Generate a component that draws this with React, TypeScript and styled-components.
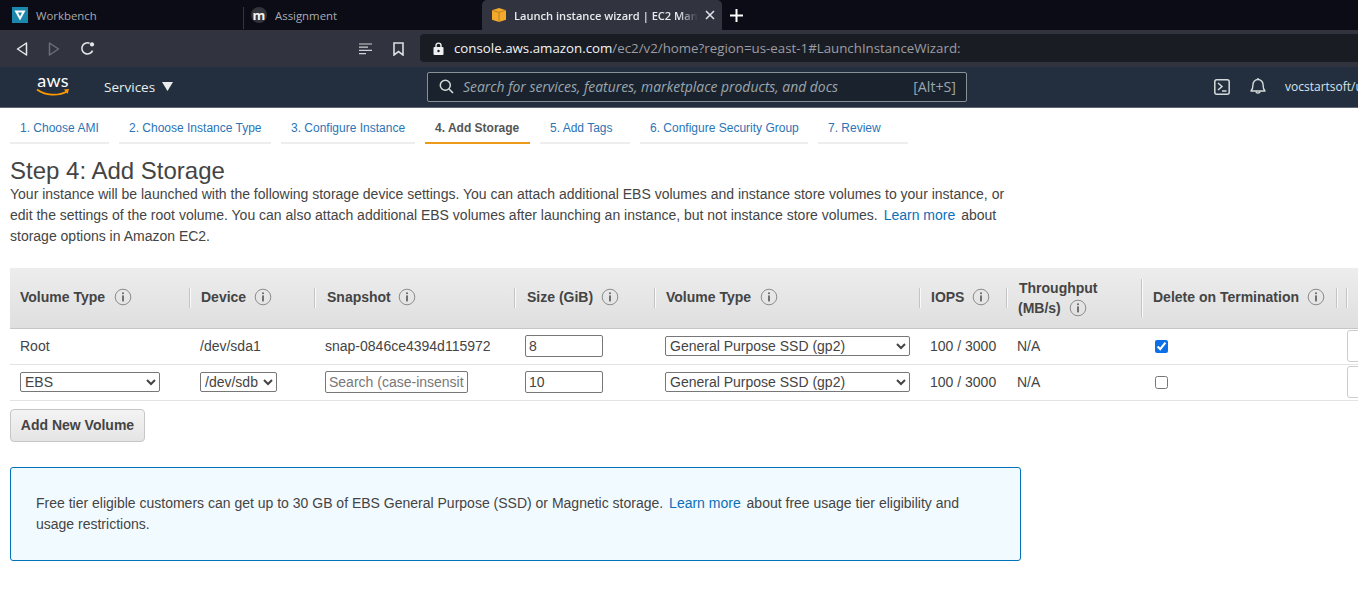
import React from 'react';
import styled, { createGlobalStyle } from 'styled-components';

const GlobalStyle = createGlobalStyle`
  html, body {
    margin: 0;
    padding: 0;
    width: 1358px;
    height: 599px;
    overflow: hidden;
    background: #fff;
  }
  * { box-sizing: border-box; }
`;

const steps = [
  { label: '1. Choose AMI', width: 99 },
  { label: '2. Choose Instance Type', width: 152 },
  { label: '3. Configure Instance', width: 134 },
  { label: '4. Add Storage', width: 105, active: true },
  { label: '5. Add Tags', width: 90 },
  { label: '6. Configure Security Group', width: 168 },
  { label: '7. Review', width: 90 },
];

const InfoIcon = () => (
  <InfoSvg viewBox="0 0 18 18">
    <circle cx="9" cy="9" r="7.8" fill="none" stroke="#8c8c8c" strokeWidth="1" />
    <rect x="8.2" y="7.4" width="1.6" height="6" fill="#555" />
    <rect x="8.2" y="4.4" width="1.6" height="1.7" fill="#555" />
  </InfoSvg>
);

const Head = ({ gap = 9, children }: { gap?: number; children: React.ReactNode }) => (
  <HeadLabel $gap={gap}>
    {children}
    <InfoIcon />
  </HeadLabel>
);

const App = () => (
  <Page>
    <GlobalStyle />
    <TabStrip>
      <Tab $width={243} $pad={12}>
        <svg width="16" height="16" viewBox="0 0 16 16">
          <rect width="16" height="16" fill="#1b87ad" />
          <path d="M2.5 3.5h11L8 13.5z" fill="#fff" />
          <path d="M6 5.5h4L8 9.5z" fill="#1b87ad" />
        </svg>
        <TabTitle>Workbench</TabTitle>
      </Tab>
      <TabDivider />
      <Tab $width={238} $pad={7}>
        <MoodleIcon>m</MoodleIcon>
        <TabTitle>Assignment</TabTitle>
      </Tab>
      <ActiveTab>
        <svg width="16" height="16" viewBox="0 0 16 16">
          <path d="M1 3.2 8 1l7 2.2v9.6L8 15l-7-2.2z" fill="#f2a92c" />
          <path d="M1 3.2 8 5.4l7-2.2" fill="none" stroke="#a8701a" strokeWidth="0.7" />
          <path d="M8 5.4V15" stroke="#a8701a" strokeWidth="0.7" />
        </svg>
        <ActiveTitle>Launch instance wizard | EC2 Management Console</ActiveTitle>
        <svg width="10" height="10" viewBox="0 0 10 10">
          <path d="M1 1l8 8M9 1l-8 8" stroke="#e4e6ea" strokeWidth="1.5" />
        </svg>
      </ActiveTab>
      <NewTab>
        <svg width="13" height="13" viewBox="0 0 13 13">
          <path d="M6.5 0v13M0 6.5h13" stroke="#fff" strokeWidth="2" />
        </svg>
      </NewTab>
    </TabStrip>

    <Toolbar>
      <NavIcons>
        <svg width="12" height="14" viewBox="0 0 12 14">
          <path d="M10.5 1 1.5 7l9 6z" fill="none" stroke="#e6e7ea" strokeWidth="1.5" strokeLinejoin="round" />
        </svg>
        <svg width="12" height="14" viewBox="0 0 12 14">
          <path d="M1.5 1l9 6-9 6z" fill="none" stroke="#6b6e78" strokeWidth="1.5" strokeLinejoin="round" />
        </svg>
        <svg width="15" height="15" viewBox="0 0 15 15">
          <path d="M12.6 9.6A5.6 5.6 0 1 1 9.6 2.2" fill="none" stroke="#e6e7ea" strokeWidth="1.6" />
          <circle cx="12" cy="3.4" r="2.1" fill="#e6e7ea" />
        </svg>
      </NavIcons>
      <ToolbarRight>
        <svg width="14" height="12" viewBox="0 0 14 12">
          <path d="M0 1h13M0 4.2h9M0 7.4h13M0 10.6h7" stroke="#cfd1d6" strokeWidth="1.2" />
        </svg>
        <svg width="11" height="14" viewBox="0 0 11 14">
          <path d="M1 1h9v12L5.5 9.6 1 13z" fill="none" stroke="#dcdde1" strokeWidth="1.6" />
        </svg>
      </ToolbarRight>
      <AddressBar>
        <svg width="11" height="13" viewBox="0 0 11 13">
          <path d="M3 5.5V3.6a2.5 2.5 0 0 1 5 0v1.9" fill="none" stroke="#f0f0f2" strokeWidth="1.4" />
          <rect x="0.5" y="5" width="10" height="8" rx="1" fill="#f0f0f2" />
          <circle cx="5.5" cy="9" r="1.2" fill="#1a1c23" />
        </svg>
        <Url>
          console.aws.amazon.com<UrlPath>/ec2/v2/home?region=us-east-1#LaunchInstanceWizard:</UrlPath>
        </Url>
      </AddressBar>
    </Toolbar>

    <AwsNav>
      <AwsLogo>
        <AwsWord>aws</AwsWord>
        <svg width="34" height="9" viewBox="0 0 34 9">
          <path d="M1 1.5c8 6 21 7 30 2" fill="none" stroke="#f90" strokeWidth="1.7" />
          <path d="M28 1.5l5-.5-1.5 5z" fill="#f90" />
        </svg>
      </AwsLogo>
      <ServicesButton>
        Services
        <svg width="11" height="9" viewBox="0 0 11 9">
          <path d="M0 0h11L5.5 9z" fill="#eaeded" />
        </svg>
      </ServicesButton>
      <SearchBox>
        <svg width="15" height="15" viewBox="0 0 15 15">
          <circle cx="6.3" cy="6.3" r="5" fill="none" stroke="#d5dbdb" strokeWidth="1.5" />
          <path d="M10 10l4 4" stroke="#d5dbdb" strokeWidth="1.6" />
        </svg>
        <SearchText>Search for services, features, marketplace products, and docs</SearchText>
        <Shortcut>[Alt+S]</Shortcut>
      </SearchBox>
      <NavRight>
        <svg width="16" height="16" viewBox="0 0 16 16">
          <rect x="0.8" y="0.8" width="14.4" height="14.4" rx="2" fill="none" stroke="#d5dbdb" strokeWidth="1.5" />
          <path d="M4 4l4 3.5L4 11M8 12h4.5" fill="none" stroke="#d5dbdb" strokeWidth="1.5" />
        </svg>
        <svg width="16" height="17" viewBox="0 0 16 17">
          <path d="M1 13c2-2 2-3.5 2-6.5a5 5 0 0 1 10 0c0 3 0 4.5 2 6.5z" fill="none" stroke="#d5dbdb" strokeWidth="1.4" strokeLinejoin="round" />
          <path d="M8 0v1.5" stroke="#d5dbdb" strokeWidth="1.4" />
          <path d="M5.8 13.5a2.3 2.3 0 0 0 4.4 0" fill="none" stroke="#d5dbdb" strokeWidth="1.4" />
        </svg>
        <UserName>vocstartsoft/user1234</UserName>
      </NavRight>
    </AwsNav>

    <Wizard>
      {steps.map((step) => (
        <Step key={step.label} $width={step.width} $active={step.active}>
          {step.label}
        </Step>
      ))}
    </Wizard>

    <Content>
      <Title>Step 4: Add Storage</Title>
      <Intro>
        Your instance will be launched with the following storage device settings. You can attach
        additional EBS volumes and instance store volumes to your instance, or edit the settings of
        the root volume. You can also attach additional EBS volumes after launching an instance, but
        not instance store volumes. <Link>Learn more</Link> about storage options in Amazon EC2.
      </Intro>

      <TableWrap>
        <Table>
          <colgroup>
            <col width="180" />
            <col width="125" />
            <col width="200" />
            <col width="140" />
            <col width="265" />
            <col width="87" />
            <col width="135" />
            <col width="195" />
            <col width="10" />
            <col width="61" />
          </colgroup>
          <thead>
            <tr>
              <Th><Head>Volume Type</Head></Th>
              <Th $pad={11}><Head gap={8}>Device</Head></Th>
              <Th $pad={12}><Head gap={7}>Snapshot</Head></Th>
              <Th $pad={12}><Head gap={8}>Size (GiB)</Head></Th>
              <Th $pad={11}><Head>Volume Type</Head></Th>
              <Th $pad={11}><Head gap={8}>IOPS</Head></Th>
              <Th $pad={11} $tall>
                <ThroughputLine>Throughput</ThroughputLine>
                <Head gap={8}>(MB/s)</Head>
              </Th>
              <Th $pad={11}><Head gap={8}>Delete on Termination</Head></Th>
              <Th />
              <Th />
            </tr>
          </thead>
          <tbody>
            <tr>
              <Td>Root</Td>
              <Td>/dev/sda1</Td>
              <Td>snap-0846ce4394d115972</Td>
              <Td><SizeInput defaultValue="8" /></Td>
              <Td>
                <TypeSelect $width={245}>
                  <option>General Purpose SSD (gp2)</option>
                </TypeSelect>
              </Td>
              <Td>100 / 3000</Td>
              <Td>N/A</Td>
              <CheckCell><Check type="checkbox" defaultChecked /></CheckCell>
              <Td />
              <Td><RowAction /></Td>
            </tr>
            <tr>
              <Td>
                <TypeSelect $width={140}>
                  <option>EBS</option>
                </TypeSelect>
              </Td>
              <Td>
                <TypeSelect $width={77}>
                  <option>/dev/sdb</option>
                </TypeSelect>
              </Td>
              <Td>
                <SnapshotInput placeholder="Search (case-insensitive)" />
              </Td>
              <Td><SizeInput defaultValue="10" /></Td>
              <Td>
                <TypeSelect $width={245}>
                  <option>General Purpose SSD (gp2)</option>
                </TypeSelect>
              </Td>
              <Td>100 / 3000</Td>
              <Td>N/A</Td>
              <CheckCell><Check type="checkbox" /></CheckCell>
              <Td />
              <Td><RowAction /></Td>
            </tr>
          </tbody>
        </Table>
      </TableWrap>

      <AddButton>Add New Volume</AddButton>

      <Notice>
        Free tier eligible customers can get up to 30 GB of EBS General Purpose (SSD) or Magnetic
        storage. <Link>Learn more</Link> about free usage tier eligibility and usage restrictions.
      </Notice>
    </Content>
  </Page>
);

export default App;

const Page = styled.div`
  width: 1358px;
  height: 599px;
  overflow: hidden;
  font-family: 'Liberation Sans', Arial, sans-serif;
  color: #444;
`;
const TabStrip = styled.div`
  display: flex;
  height: 30px;
  background: #0b0c16;
  font-family: 'Open Sans', 'Noto Sans', sans-serif;
  font-size: 11.4px;
`;
const Tab = styled.div<{ $width: number; $pad: number }>`
  display: flex;
  align-items: center;
  gap: 8px;
  width: ${(p) => p.$width}px;
  padding-left: ${(p) => p.$pad}px;
  color: #a9abb2;
`;
const TabTitle = styled.span`
  white-space: nowrap;
`;
const TabDivider = styled.div`
  width: 1px;
  height: 22px;
  margin-top: 7px;
  background: #34363f;
`;
const MoodleIcon = styled.span`
  display: flex;
  align-items: center;
  justify-content: center;
  width: 16px;
  height: 16px;
  border-radius: 50%;
  background: #33343b;
  color: #f2f2f2;
  font-size: 13px;
  font-weight: 700;
  line-height: 14px;
`;
const ActiveTab = styled.div`
  display: flex;
  align-items: center;
  width: 240px;
  height: 30px;
  padding: 0 7px 0 9px;
  border-radius: 5px 5px 0 0;
  background: #31343f;
  color: #e8e9ec;
  font-size: 11.1px;
  font-weight: 600;
`;
const ActiveTitle = styled.span`
  width: 185px;
  margin: 0 6px 0 7px;
  overflow: hidden;
  white-space: nowrap;
  -webkit-mask-image: linear-gradient(90deg, #000 165px, transparent 184px);
  mask-image: linear-gradient(90deg, #000 165px, transparent 184px);
`;
const NewTab = styled.div`
  display: flex;
  align-items: center;
  padding-left: 8px;
`;
const Toolbar = styled.div`
  display: flex;
  align-items: center;
  height: 37px;
  background: #31343f;
`;
const NavIcons = styled.div`
  display: flex;
  align-items: center;
  gap: 20px;
  width: 359px;
  padding-left: 16px;
`;
const ToolbarRight = styled.div`
  display: flex;
  align-items: center;
  gap: 20px;
  width: 61px;
`;
const AddressBar = styled.div`
  display: flex;
  align-items: center;
  gap: 10px;
  flex: 1;
  height: 28px;
  margin-top: -1px;
  padding-left: 13px;
  border-radius: 4px 0 0 4px;
  background: #1a1c23;
`;
const Url = styled.span`
  color: #f2f3f5;
  font-family: 'Open Sans', 'Noto Sans', sans-serif;
  font-size: 13.3px;
  white-space: nowrap;
`;
const UrlPath = styled.span`
  color: #9a9ca3;
`;
const AwsNav = styled.div`
  display: flex;
  align-items: center;
  height: 41px;
  padding-bottom: 1px;
  background: #232f3e;
  border-bottom: 1px solid #5f6670;
  font-family: 'Open Sans', 'Noto Sans', sans-serif;
  overflow: hidden;
`;
const AwsLogo = styled.div`
  display: flex;
  flex: none;
  flex-direction: column;
  align-items: center;
  width: 34px;
  margin-left: 36px;
  margin-top: -3px;
`;
const AwsWord = styled.span`
  height: 15px;
  color: #fff;
  font-family: Lato, 'Open Sans', sans-serif;
  font-size: 18px;
  line-height: 15px;
  letter-spacing: 0.2px;
`;
const ServicesButton = styled.div`
  display: flex;
  flex: none;
  align-items: center;
  gap: 7px;
  width: 323px;
  margin-left: 34px;
  color: #eaeded;
  font-size: 13.5px;
`;
const SearchBox = styled.div`
  display: flex;
  flex: none;
  align-items: center;
  width: 540px;
  height: 30px;
  padding: 0 10px 0 11px;
  border: 1px solid #879196;
  border-radius: 2px;
  background: #1a232d;
  color: #9aa6ae;
  font-size: 13.9px;
`;
const SearchText = styled.span`
  flex: 1;
  margin-left: 9px;
  font-style: italic;
  white-space: nowrap;
`;
const Shortcut = styled.span`
  font-size: 14.2px;
`;
const NavRight = styled.div`
  display: flex;
  flex: none;
  align-items: center;
  gap: 20px;
  margin-left: 247px;
`;
const UserName = styled.span`
  margin-left: -1px;
  color: #d5e4f0;
  font-size: 12px;
  white-space: nowrap;
`;
const Wizard = styled.div`
  display: flex;
  gap: 10px;
  height: 36px;
  padding: 10px 0 0 10px;
`;
const Step = styled.div<{ $width: number; $active?: boolean }>`
  width: ${(p) => p.$width}px;
  height: 26px;
  padding-left: 10px;
  border-bottom: 2px solid ${(p) => (p.$active ? '#ec9a1c' : '#eeeeee')};
  color: ${(p) => (p.$active ? '#555' : '#2b74b5')};
  font-size: 12px;
  font-weight: ${(p) => (p.$active ? 700 : 400)};
  line-height: 20px;
  white-space: nowrap;
`;
const Content = styled.div`
  padding: 0 10px;
`;
const Title = styled.h1`
  margin: 13px 0 0;
  color: #444;
  font-size: 24px;
  font-weight: 400;
  line-height: 27px;
`;
const Intro = styled.p`
  width: 1000px;
  margin: 0;
  font-size: 14px;
  line-height: 21px;
`;
const Link = styled.span`
  color: #0b6fb8;
  margin: 0 2px;
`;
const TableWrap = styled.div`
  width: 1348px;
  margin-top: 21px;
  overflow: hidden;
`;
const Table = styled.table`
  width: 1398px;
  border-collapse: collapse;
  table-layout: fixed;
  font-size: 14px;
`;
const Th = styled.th<{ $tall?: boolean; $pad?: number }>`
  position: relative;
  height: 60px;
  padding: 0 0 ${(p) => (p.$tall ? 0 : 2)}px ${(p) => p.$pad ?? 10}px;
  background: linear-gradient(#ededed, #dfdfdf);
  border-bottom: 1px solid #c6c6c6;
  color: #444;
  font-size: 14px;
  font-weight: 700;
  line-height: 20px;
  text-align: left;
  white-space: nowrap;
  &::after {
    content: '';
    position: absolute;
    z-index: 1;
    right: -1px;
    top: 50%;
    height: ${(p) => (p.$tall ? 38 : 20)}px;
    margin-top: ${(p) => (p.$tall ? -19 : -10)}px;
    border-left: 1px solid #c4c4c4;
    border-right: 1px solid #fafafa;
  }
`;
const ThroughputLine = styled.div`
  padding-left: 1px;
`;
const HeadLabel = styled.span<{ $gap: number }>`
  display: inline-flex;
  align-items: center;
  gap: ${(p) => p.$gap}px;
`;
const InfoSvg = styled.svg`
  width: 18px;
  height: 18px;
`;
const Td = styled.td`
  height: 36px;
  padding: 0 10px;
  border-bottom: 1px solid #e3e3e3;
  white-space: nowrap;
  overflow: hidden;
`;
const CheckCell = styled(Td)`
  padding-left: 13px;
`;
const SizeInput = styled.input`
  display: block;
  width: 78px;
  height: 22px;
  padding: 0 3px;
  border: 1px solid #777;
  border-radius: 2px;
  background: #fff;
  color: #444;
  font-family: inherit;
  font-size: 14px;
`;
const SnapshotInput = styled(SizeInput)`
  width: 143px;
  &::placeholder {
    color: #777;
    opacity: 1;
  }
`;
const TypeSelect = styled.select<{ $width: number }>`
  display: block;
  width: ${(p) => p.$width}px;
  height: 20px;
  padding: 0;
  border: 1px solid #777;
  border-radius: 2px;
  background: #fff;
  color: #444;
  font-family: inherit;
  font-size: 14px;
`;
const Check = styled.input`
  display: block;
  width: 13px;
  height: 13px;
  margin: 0;
  accent-color: #0b6fe8;
`;
const RowAction = styled.div`
  width: 40px;
  height: 32px;
  border: 1px solid #ccc;
  border-radius: 3px;
  margin-left: -10px;
`;
const AddButton = styled.button`
  display: block;
  width: 135px;
  height: 33px;
  margin-top: 8px;
  padding: 0;
  border: 1px solid #c6c6c6;
  border-radius: 4px;
  background: linear-gradient(#f4f4f4, #e4e4e4);
  color: #444;
  font-family: inherit;
  font-size: 14px;
  font-weight: 700;
`;
const Notice = styled.div`
  width: 1011px;
  height: 94px;
  margin-top: 25px;
  padding: 25px 25px 0;
  border: 1px solid #0073bb;
  border-radius: 3px;
  background: #f1faff;
  font-size: 14px;
  line-height: 21px;
`;
